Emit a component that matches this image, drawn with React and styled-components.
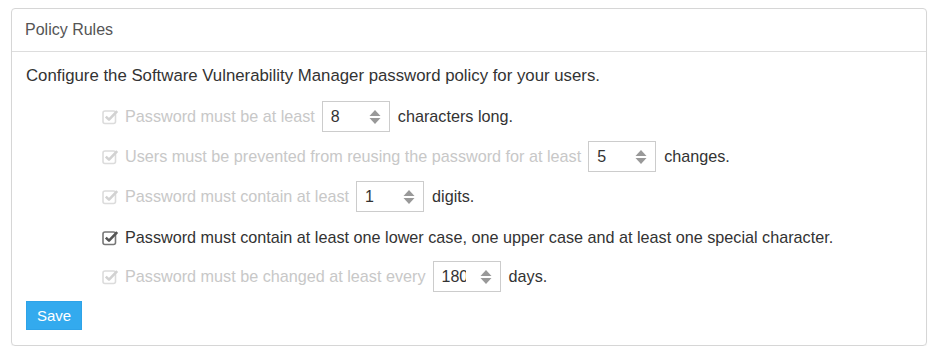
import styled, { createGlobalStyle } from "styled-components";

const GlobalStyle = createGlobalStyle`
  body {
    margin: 0;
    background: #fff;
    font-family: "Liberation Sans", Arial, sans-serif;
    color: #333;
  }
`;

const CheckIcon = ({ muted }) => (
  <svg width="17" height="16" viewBox="0 0 17 16">
    <rect
      x="1"
      y="2"
      width="12.5"
      height="12.5"
      rx="2"
      fill="none"
      stroke={muted ? "#dcdcdc" : "#777"}
      strokeWidth="1.6"
    />
    <path
      d="M3.8 7.6 L7 10.6 L15.2 2.2"
      fill="none"
      stroke={muted ? "#d2d2d2" : "#555"}
      strokeWidth="2.6"
      strokeLinejoin="round"
    />
  </svg>
);

const SpinArrows = () => (
  <svg width="12" height="16" viewBox="0 0 12 16">
    <path d="M6 1 L11.5 7 L0.5 7 Z" fill="#999" />
    <path d="M6 15 L11.5 9 L0.5 9 Z" fill="#999" />
  </svg>
);

const Spinner = ({ value }) => (
  <SpinBox>
    <SpinValue>{value}</SpinValue>
    <SpinArrows />
  </SpinBox>
);

const rules = [
  { pre: "Password must be at least", value: "8", post: "characters long.", muted: true },
  {
    pre: "Users must be prevented from reusing the password for at least",
    value: "5",
    post: "changes.",
    muted: true,
  },
  { pre: "Password must contain at least", value: "1", post: "digits.", muted: true },
  {
    pre: "Password must contain at least one lower case, one upper case and at least one special character.",
    muted: false,
  },
  { pre: "Password must be changed at least every", value: "180", post: "days.", muted: true },
];

const App = () => {
  return (
    <Page>
      <GlobalStyle />
      <Card>
        <Header>Policy Rules</Header>
        <Body>
          <Intro>Configure the Software Vulnerability Manager password policy for your users.</Intro>
          <Rules>
            {rules.map((rule, i) => (
              <Rule key={i}>
                <CheckIcon muted={rule.muted} />
                <Label $muted={rule.muted}>{rule.pre}</Label>
                {rule.value && <Spinner value={rule.value} />}
                {rule.post && <Suffix>{rule.post}</Suffix>}
              </Rule>
            ))}
          </Rules>
          <SaveButton>Save</SaveButton>
        </Body>
      </Card>
    </Page>
  );
};

export default App;

/*
Styles
*/

const Page = styled.div`
  padding: 8px 7px 0 11px;
`;

const Card = styled.div`
  width: 916px;
  height: 338px;
  border: 1px solid #d6d6d6;
  border-radius: 4px;
  box-sizing: border-box;
  box-shadow: 0 1px 1px rgba(0, 0, 0, 0.05);
`;

const Header = styled.div`
  height: 43px;
  box-sizing: border-box;
  padding: 12px 13px 0;
  border-bottom: 1px solid #ddd;
  font-size: 16px;
  color: #555;
`;

const Body = styled.div`
  padding: 13px 14px 0;
`;

const Intro = styled.div`
  font-size: 16.8px;
  line-height: 22px;
  color: #333;
`;

const Rules = styled.div`
  display: flex;
  flex-direction: column;
  gap: 9px;
  padding: 14px 0 0 76px;
`;

const Rule = styled.div`
  display: flex;
  align-items: center;
  height: 31px;
  font-size: 16.2px;
  gap: 7px;
  &:nth-child(4) {
    margin-top: 1px;
  }
  &:nth-child(5) {
    margin-top: -1px;
  }
`;

const Label = styled.span`
  color: ${(p) => (p.$muted ? "#c8c8c8" : "#333")};
  margin-left: -1px;
`;

const Suffix = styled.span`
  color: #333;
  margin-left: 1px;
`;

const SpinBox = styled.div`
  display: inline-flex;
  align-items: center;
  width: 68px;
  height: 31px;
  box-sizing: border-box;
  border: 1px solid #ccc;
  padding: 0 8px 0 8px;
  background: #fff;
`;

const SpinValue = styled.span`
  width: 24px;
  overflow: hidden;
  white-space: nowrap;
  color: #333;
  font-size: 16px;
  margin-right: auto;
`;

const SaveButton = styled.button`
  margin-top: 9px;
  width: 56px;
  height: 29px;
  border: 1px solid #2ea3e8;
  border-radius: 0;
  background: #33aaee;
  color: #fff;
  font-family: "Liberation Sans", Arial, sans-serif;
  font-size: 15px;
  padding: 0;
  cursor: pointer;
`;
